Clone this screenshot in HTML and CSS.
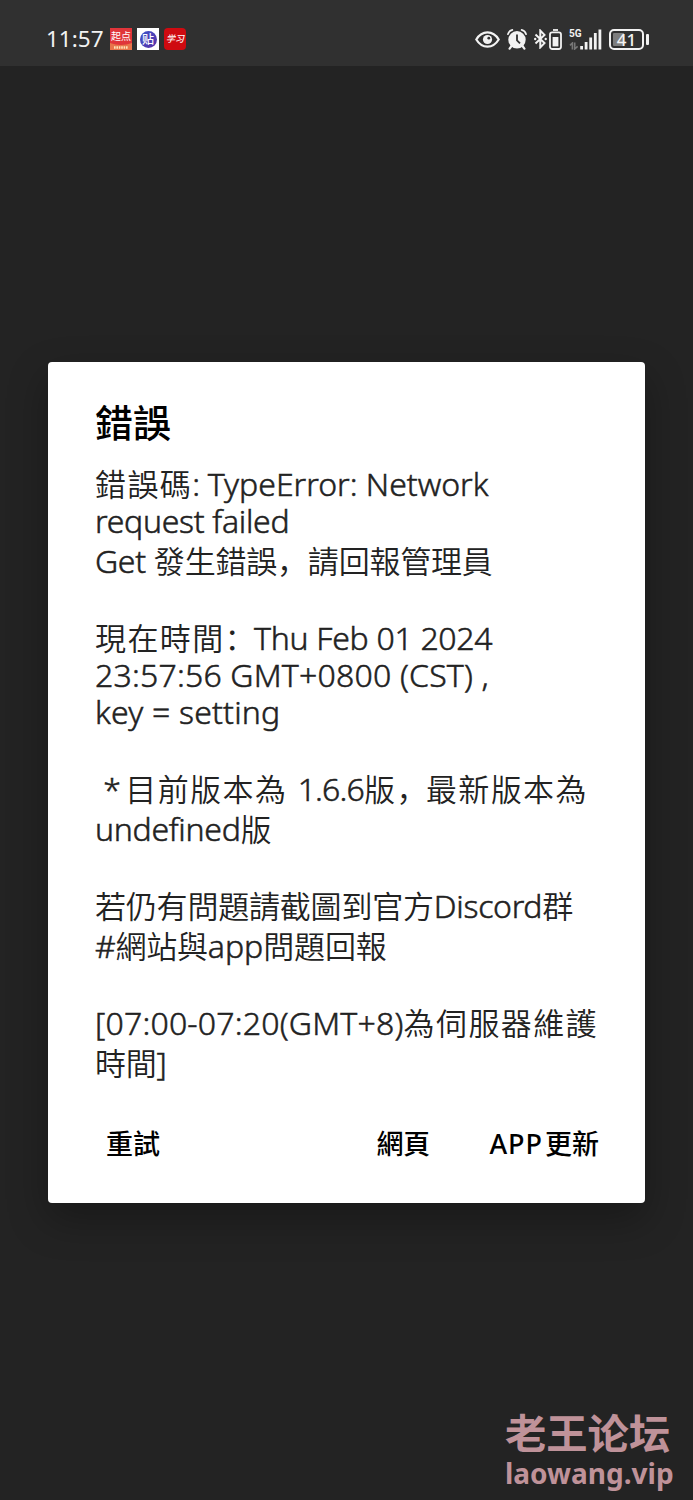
FILE: index.html
```html
<!DOCTYPE html>
<html lang="zh-Hant">
<head>
    <meta charset="UTF-8">
    <meta name="viewport" content="width=device-width, initial-scale=1.0">
    <title>錯誤</title>
    <link rel="stylesheet" href="styles.css">
</head>
<body>
    <div class="status-bar">
        <span class="time">11:57</span>
        <div class="app-icons">
            <div class="app-icon qidian">
                <span>起点</span>
                <svg width="22" height="7" viewBox="0 0 22 7"><path d="M0 0Q11 4 22 0V7H0Z" fill="#e8744a"/><path d="M4 4.5h14" stroke="#ffe3b8" stroke-width="2.4" stroke-dasharray="1.6 .8"/></svg>
            </div>
            <div class="app-icon tieba"><span>贴</span></div>
            <div class="app-icon xuexi"><span>学习</span></div>
        </div>
        <div class="system-icons">
            <svg class="eye" width="25" height="17" viewBox="0 0 25 17"><path d="M1.3 8.5C4 4 8 1.4 12.5 1.4S21 4 23.7 8.5C21 13 17 15.6 12.5 15.6S4 13 1.3 8.5Z" fill="none" stroke="#f2f2f2" stroke-width="2.2"/><circle cx="12.5" cy="8.5" r="4.6" fill="#f2f2f2"/><circle cx="13.8" cy="7.2" r="1.4" fill="#303030"/></svg>
            <svg class="alarm" width="20" height="21" viewBox="0 0 20 21"><circle cx="10" cy="10.8" r="8.7" fill="#f2f2f2"/><path d="M.9 5.2Q1.8 1.8 5.4.9M19.1 5.2Q18.2 1.8 14.6.9" fill="none" stroke="#f2f2f2" stroke-width="1.7" stroke-linecap="round"/><path d="M4.5 17 2.6 19.6M15.5 17l1.9 2.6" stroke="#f2f2f2" stroke-width="2.2" stroke-linecap="round"/><path d="M10 5.5v5.8l3 3" fill="none" stroke="#303030" stroke-width="1.8"/></svg>
            <svg class="bluetooth" width="13" height="20" viewBox="0 0 13 20"><path d="M1.5 5.5l9 8.6L6.3 18.4V1.6l4.2 4.3-9 8.6" fill="none" stroke="#f2f2f2" stroke-width="2"/><circle cx="1.2" cy="10" r="1.2" fill="#f2f2f2"/><circle cx="11.7" cy="10" r="1.2" fill="#f2f2f2"/></svg>
            <svg class="device" width="13" height="21" viewBox="0 0 13 21"><path d="M4 1h5" stroke="#f2f2f2" stroke-width="1.8"/><rect x="1" y="3.4" width="11" height="16.6" rx="2.2" fill="none" stroke="#f2f2f2" stroke-width="1.8"/><rect x="3.6" y="8" width="5.8" height="9.4" fill="#f2f2f2"/></svg>
            <div class="network">
                <span>5G</span>
                <svg width="10" height="8" viewBox="0 0 10 8"><path d="M1 3.4 3.4 1V7.5M5.7.5V7L8.6 4.4" fill="none" stroke="#777" stroke-width="1.6"/></svg>
            </div>
            <svg class="signal" width="22" height="21" viewBox="0 0 22 21"><path d="M1.6 17v3.5M6.1 13v7.5M10.7 8.5v12M15.3 4v16.5M19.9.5v20" stroke="#f2f2f2" stroke-width="2.8"/></svg>
            <div class="battery"><span>41</span></div>
            <div class="battery-tip"></div>
        </div>
    </div>

    <div class="dialog">
        <h1 class="title">錯誤</h1>
        <div class="message">
            <div class="line tall"><span class="wide">錯誤碼</span><span class="tight">: </span>TypeError: Network</div>
            <div class="line"><span class="tight">request failed</span></div>
            <div class="line tall"><span class="tight">Get </span><span class="zh">發生錯誤<span class="mark" lang="zh-Hans">，</span>請回報管理員</span></div>
            <div class="line"></div>
            <div class="line tall"><span class="wide">現在時間<span class="mark" lang="zh-Hans">：</span></span><span class="tight">Thu Feb 01 2024</span></div>
            <div class="line"><span class="digits">23:57:56 GMT+0800 (CST) ,</span></div>
            <div class="line"><span class="digits">key = setting</span></div>
            <div class="line"></div>
            <div class="line tall"> <span class="star">*</span> <span class="wide">目前版本為</span> <span class="version">1.6.6</span><span class="wide">版<span class="mark" lang="zh-Hans">，</span>最新版本為</span></div>
            <div class="line tall"><span class="tight">undefined</span><span class="zh">版</span></div>
            <div class="line"></div>
            <div class="line tall"><span class="zh">若仍有問題請截圖到官方</span><span class="tight">Discord</span><span class="zh">群</span></div>
            <div class="line tall"><span class="tight">#</span><span class="zh">網站與</span>app<span class="zh">問題回報</span></div>
            <div class="line"></div>
            <div class="line tall"><span class="digits">[07:00-07:20(GMT+8)</span><span class="wide">為伺服器維護</span></div>
            <div class="line tall"><span class="zh">時間</span>]</div>
        </div>
        <div class="actions">
            <button class="retry">重試</button>
            <button>網頁</button>
            <button><span class="app">APP</span>更新</button>
        </div>
    </div>

    <div class="watermark">
        <div class="forum">老王论坛</div>
        <div class="site">laowang.vip</div>
    </div>
</body>
</html>
```
FILE: styles.css
```css
* {
    box-sizing: border-box;
}
body {
    margin: 0;
    height: 1500px;
    display: flex;
    flex-direction: column;
    background-color: #232323;
    font-family: "Noto Sans", "Noto Sans CJK TC", sans-serif;
    overflow: hidden;
}
svg {
    display: block;
}
.status-bar {
    height: 66px;
    flex-shrink: 0;
    padding: 12px 44px 0 46px;
    display: flex;
    align-items: center;
    background-color: #303030;
    color: #f2f2f2;
}
.time {
    width: 64px;
    font-size: 22.5px;
    line-height: 24px;
}
.app-icons {
    display: flex;
    gap: 5px;
}
.app-icon {
    width: 22px;
    height: 22px;
    overflow: hidden;
    color: #fff;
    font-family: "Noto Sans CJK SC", sans-serif;
    text-align: center;
    white-space: nowrap;
}
.app-icon span {
    display: block;
}
.qidian {
    background-color: #e0353a;
    font-size: 10px;
    line-height: 15px;
}
.tieba {
    display: flex;
    align-items: center;
    justify-content: center;
    background-color: #fff;
}
.tieba span {
    width: 17px;
    height: 17px;
    border-radius: 50%;
    background: linear-gradient(135deg, #3c55c8, #5a2ea6);
    font-size: 12px;
    font-weight: 500;
    line-height: 16px;
}
.xuexi {
    border-radius: 4px;
    background-color: #cf0a10;
    font-size: 9px;
    font-style: italic;
    font-weight: 500;
    line-height: 22px;
}
.system-icons {
    margin-left: auto;
    display: flex;
    align-items: center;
}
.alarm {
    margin-left: 7px;
}
.bluetooth {
    margin-left: 7px;
}
.device {
    margin-left: 2px;
}
.network {
    width: 12px;
    height: 21px;
    margin-left: 7px;
    display: flex;
    flex-direction: column;
    justify-content: space-between;
    font-family: "Roboto", sans-serif;
    font-size: 10px;
    font-weight: 700;
    line-height: 10px;
}
.signal {
    margin-left: -1px;
}
.battery {
    width: 35px;
    height: 21px;
    margin-left: 7px;
    padding: 2px;
    border: 2px solid #f2f2f2;
    border-radius: 5px;
    background: linear-gradient(90deg, #7d7d7d 42%, transparent 42%) content-box;
    font-size: 17px;
    font-weight: 500;
    line-height: 13px;
    text-align: center;
}
.battery-tip {
    width: 3px;
    height: 11px;
    margin-left: 2px;
    border-radius: 1px;
    background-color: #f2f2f2;
}
.dialog {
    width: 597px;
    height: 841px;
    flex-shrink: 0;
    margin: 296px 0 0 48px;
    padding: 37px 46px 0 47px;
    border-radius: 4px;
    background-color: #fff;
    box-shadow: 0 16px 40px rgba(0, 0, 0, 0.3);
}
.title {
    margin: 0;
    color: #000;
    font-size: 38px;
    font-weight: 500;
    line-height: 46px;
}
.message {
    margin-top: 17px;
    color: #222;
    font-size: 32px;
    font-weight: 350;
    -webkit-text-stroke: 0.5px #222;
}
.line {
    height: 37px;
    line-height: 37px;
    white-space: pre;
}
.tall {
    height: 40px;
    padding-top: 3px;
}
.zh,
.wide {
    font-size: 31px;
    -webkit-text-stroke: 0;
}
.zh {
    letter-spacing: -0.2px;
}
.wide {
    letter-spacing: 1.4px;
}
/* punctuation sits at the lower left of its cell */
.mark {
    font-family: "Noto Sans CJK SC", sans-serif;
    line-height: 1;
}
.wide .mark {
    margin-right: -3px;
}
.tight {
    letter-spacing: -0.3px;
}
.digits {
    letter-spacing: 0.2px;
}
.star {
    margin-right: -4px;
}
.version {
    margin-left: 2px;
    letter-spacing: -0.8px;
}
.actions {
    margin-top: 43px;
    display: flex;
    align-items: center;
}
.actions button {
    margin-left: 59px;
    padding: 0;
    border: none;
    background: none;
    color: #000;
    font-family: inherit;
    font-size: 27px;
    font-weight: 500;
    line-height: 40px;
    white-space: nowrap;
    cursor: pointer;
}
.actions .retry {
    margin-left: 11px;
    margin-right: auto;
}
.app {
    margin-right: 2px;
    letter-spacing: 1px;
}
.watermark {
    margin-top: auto;
    padding: 0 18px 10px 505px;
    color: #bf9299;
    font-weight: 700;
    white-space: nowrap;
}
.forum {
    margin-bottom: 2px;
    font-family: "Noto Sans CJK SC", sans-serif;
    font-size: 41.3px;
    line-height: 46px;
}
.site {
    font-size: 28px;
    line-height: 34px;
}
```
